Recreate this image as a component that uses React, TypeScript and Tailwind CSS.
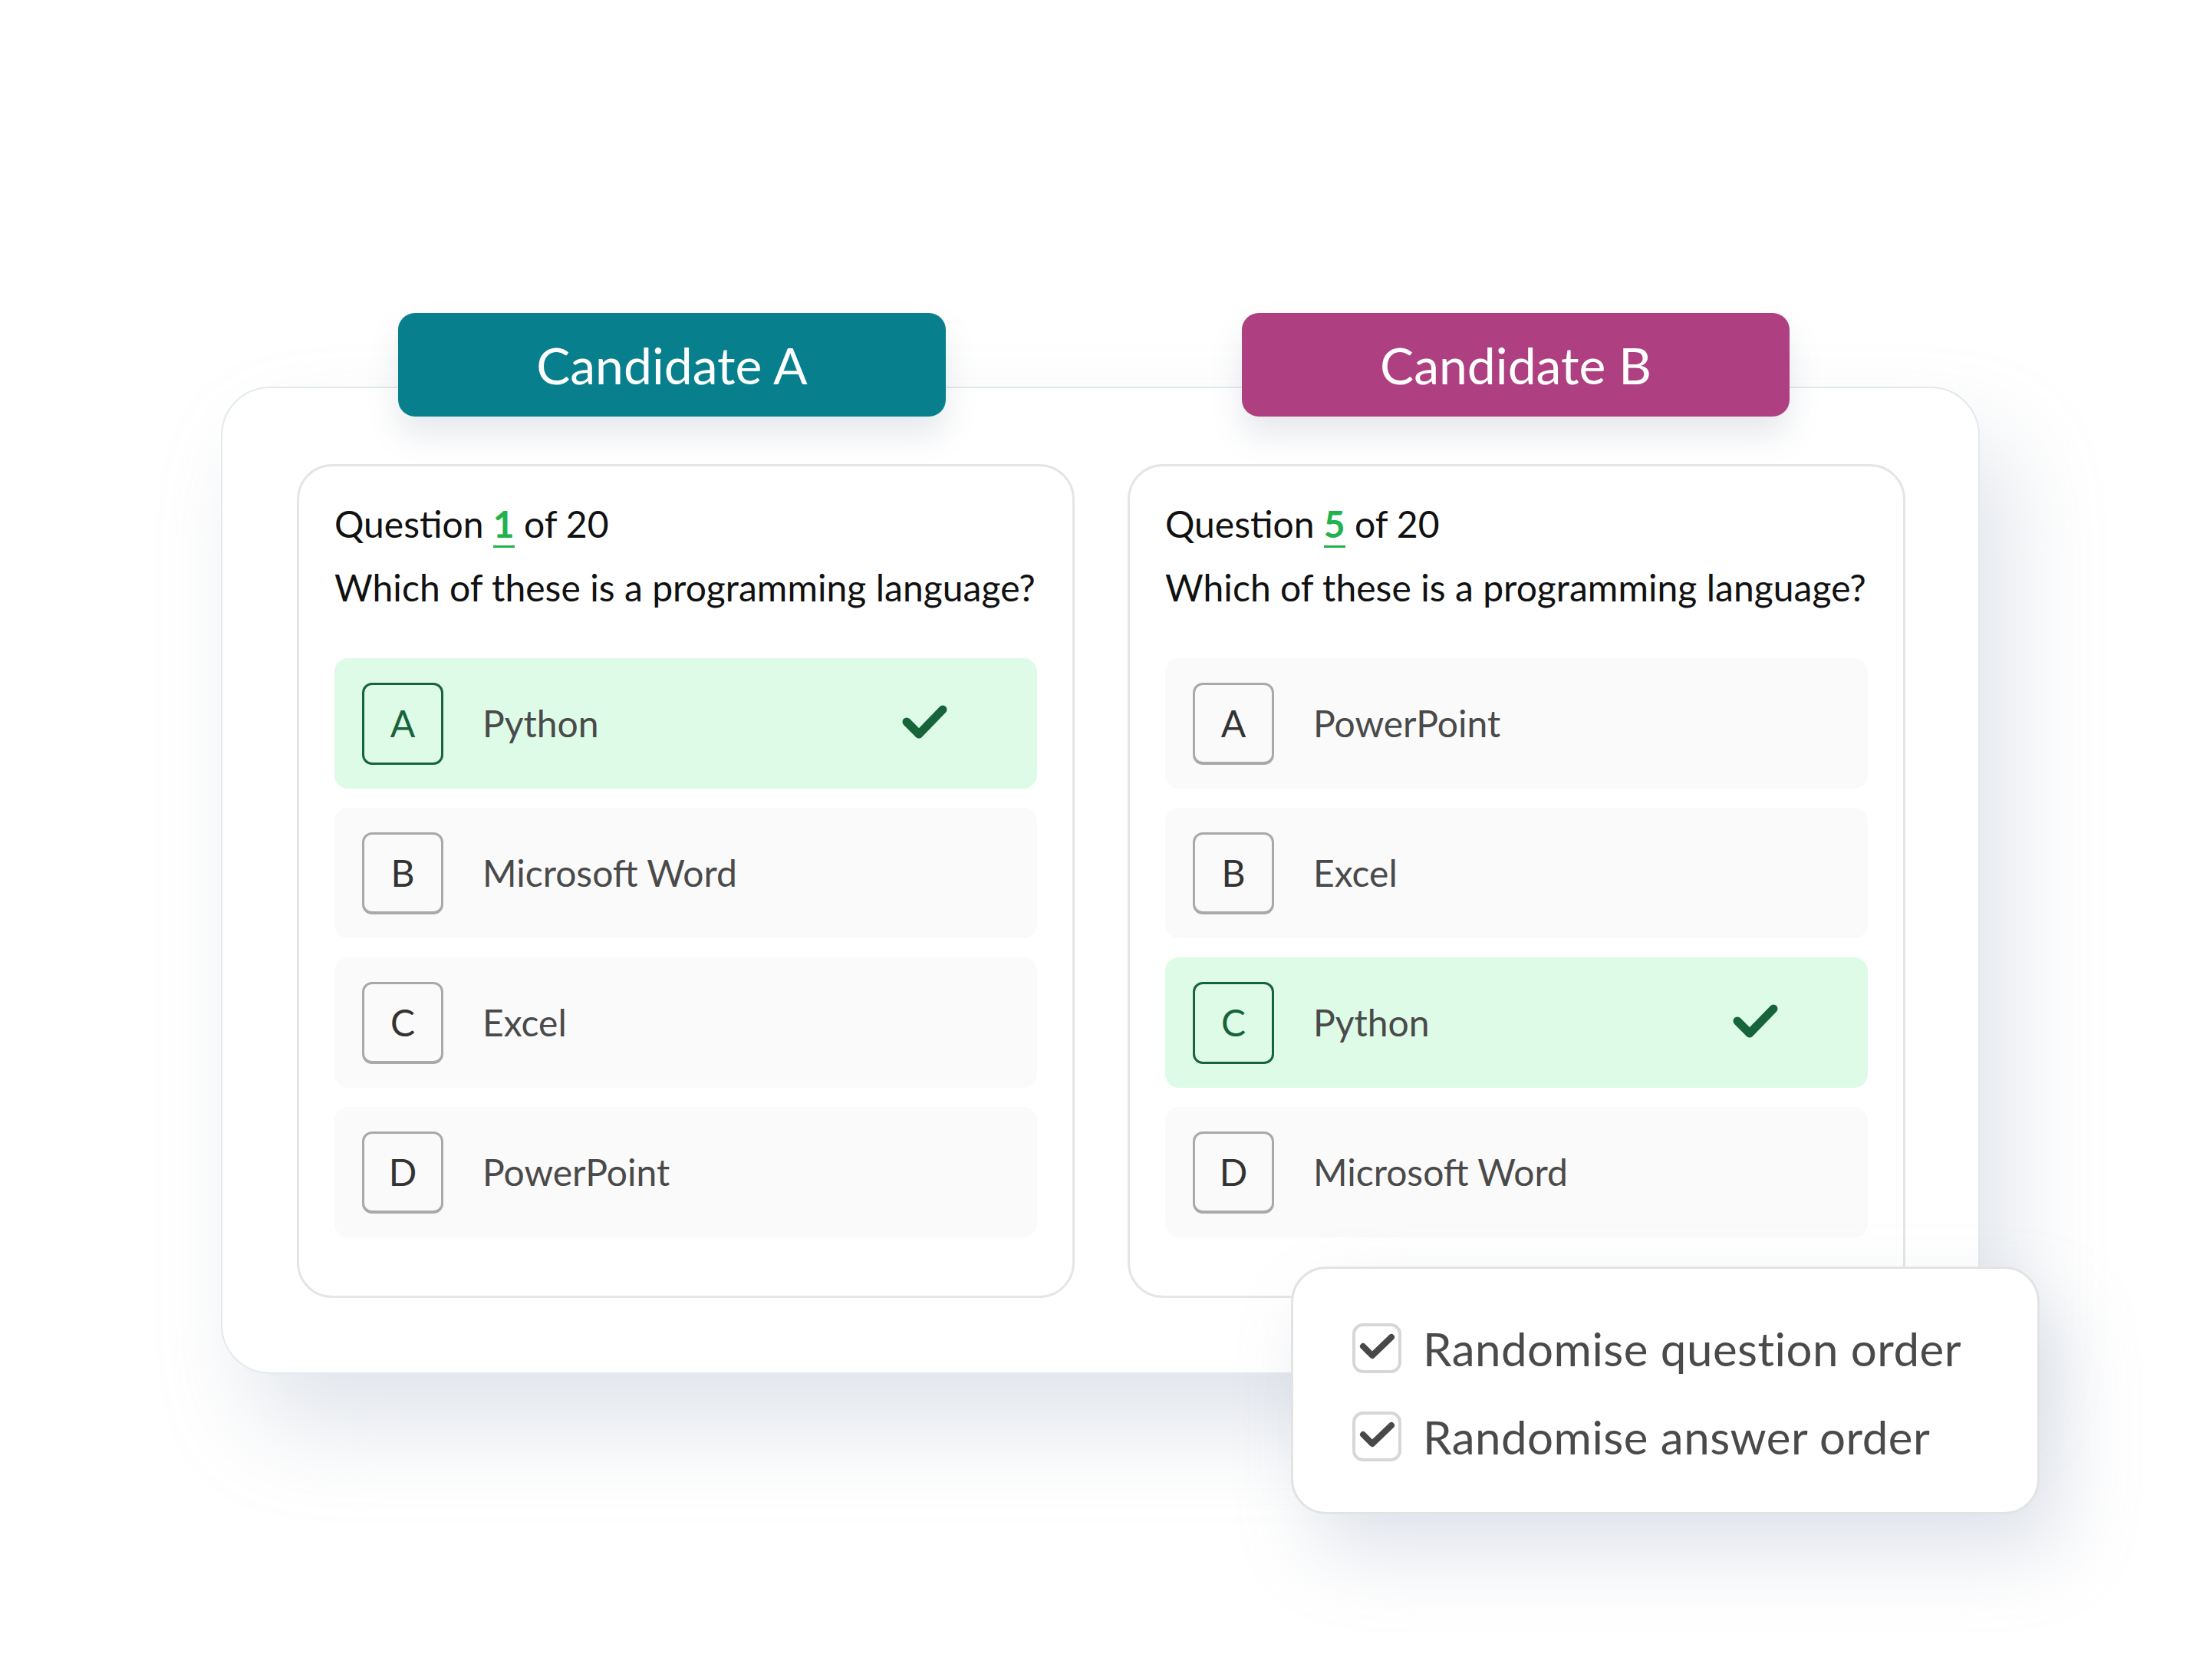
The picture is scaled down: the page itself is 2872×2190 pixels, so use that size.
import React from 'react';

type Option = { letter: string; label: string; correct?: boolean };

const candidates: { name: string; tab: string; current: number; options: Option[] }[] = [
  {
    name: 'Candidate A',
    tab: 'bg-[#077f8c]',
    current: 1,
    options: [
      { letter: 'A', label: 'Python', correct: true },
      { letter: 'B', label: 'Microsoft Word' },
      { letter: 'C', label: 'Excel' },
      { letter: 'D', label: 'PowerPoint' },
    ],
  },
  {
    name: 'Candidate B',
    tab: 'bg-[#ae4082]',
    current: 5,
    options: [
      { letter: 'A', label: 'PowerPoint' },
      { letter: 'B', label: 'Excel' },
      { letter: 'C', label: 'Python', correct: true },
      { letter: 'D', label: 'Microsoft Word' },
    ],
  },
];

const settings = ['Randomise question order', 'Randomise answer order'];

const Tick = () => (
  <svg width="66" height="50" viewBox="0 0 66 50" className="ml-auto mr-[116px] shrink-0">
    <polyline
      points="12,23 28,39 59,7"
      fill="none"
      stroke="#17633a"
      strokeWidth="11"
      strokeLinecap="round"
      strokeLinejoin="round"
    />
  </svg>
);

const OptionRow = ({ option }: { option: Option }) => (
  <div
    className={`flex h-[170px] items-center rounded-[18px] pl-[36px] ${
      option.correct ? 'bg-[#ddfbe7]' : 'bg-[#fafafa]'
    }`}
  >
    <div
      className={`flex h-[107px] w-[106px] shrink-0 items-center justify-center rounded-[13px] ${
        option.correct
          ? 'border-[3px] border-[#17633a] text-[#17633a]'
          : 'border-[3px] border-b-[4px] border-[#a9a9a9] text-[#333333]'
      }`}
    >
      {option.letter}
    </div>
    <span className="ml-[51px] text-[#4a4a4a]">{option.label}</span>
    {option.correct && <Tick />}
  </div>
);

const QuestionCard = ({ current, options }: { current: number; options: Option[] }) => (
  <div className="w-[1014px] rounded-[46px] border-[3px] border-[#e5e5e5] bg-white px-[46px] pt-[46px] pb-[76px] text-[48px] leading-[58px]">
    <p className="text-[#111111]">
      Question{' '}
      <span className="border-b-[3px] border-[#22b24c] font-bold text-[#22b24c]">{current}</span> of 20
    </p>
    <p className="mt-[25px] whitespace-nowrap tracking-[0.05px] text-[#111111]">
      Which of these is a programming language?
    </p>
    <div className="mt-[63px] flex flex-col gap-[25px]">
      {options.map(o => (
        <OptionRow key={o.letter} option={o} />
      ))}
    </div>
  </div>
);

const CheckBox = () => (
  <div className="flex h-[65px] w-[64px] shrink-0 items-center justify-center rounded-[14px] border-[4px] border-[#d7d7d7]">
    <svg width="56" height="57" viewBox="0 0 56 57">
      <polyline
        points="10,26 22,38 47,14"
        fill="none"
        stroke="#484848"
        strokeWidth="8"
        strokeLinecap="round"
        strokeLinejoin="round"
      />
    </svg>
  </div>
);

export default function App() {
  return (
    <div className="relative h-[2190px] w-[2872px] overflow-hidden bg-white pt-[408px] pl-[288px] font-['Lato',sans-serif]">
      {/* candidate tabs */}
      <div className="relative z-10 -mb-[39px] flex gap-[386px] pl-[231px]">
        {candidates.map(c => (
          <div
            key={c.name}
            className={`flex h-[135px] w-[714px] items-center justify-center rounded-[22px] text-[66px] text-white shadow-[0_24px_40px_rgba(100,116,139,0.16)] ${c.tab}`}
          >
            {c.name}
          </div>
        ))}
      </div>

      <div className="relative w-[2293px] rounded-[64px] border-2 border-[#e4e9ee] bg-white pt-[99px] pr-[95px] pb-[97px] pl-[97px] shadow-[40px_70px_120px_rgba(148,163,184,0.28)]">
        <div className="flex gap-[69px]">
          {candidates.map(c => (
            <QuestionCard key={c.name} current={c.current} options={c.options} />
          ))}
        </div>

        {/* settings popover */}
        <div className="absolute left-[1393px] top-[1145px] z-20 flex h-[323px] w-[976px] flex-col gap-[50px] rounded-[46px] border-[3px] border-[#e3e3e3] bg-white pt-[71px] pl-[77px] shadow-[30px_50px_100px_rgba(148,163,184,0.3)]">
          {settings.map(s => (
            <div key={s} className="flex h-[65px] items-center">
              <CheckBox />
              <span className="ml-[28px] text-[60px] leading-none tracking-[0.5px] text-[#4a4a4a]">{s}</span>
            </div>
          ))}
        </div>
      </div>
    </div>
  );
}
